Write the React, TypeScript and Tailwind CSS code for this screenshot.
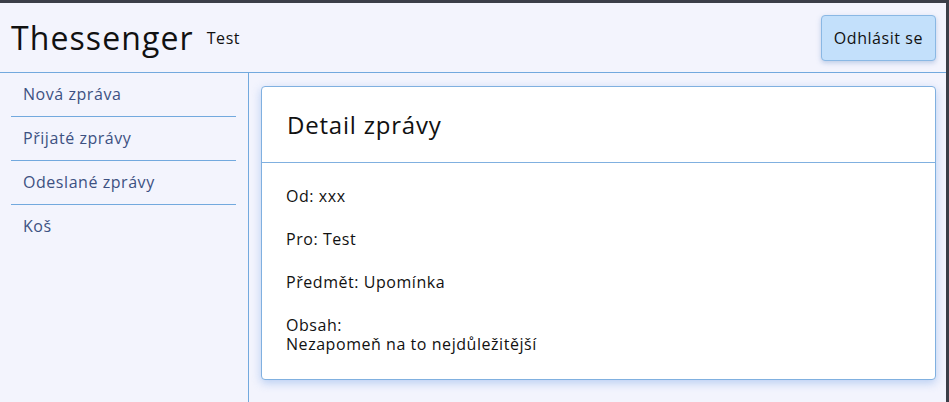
import React from "react";

const font = { fontFamily: '"Open Sans", "DejaVu Sans", sans-serif' };

export default function App() {
  const nav = ["Nová zpráva", "Přijaté zprávy", "Odeslané zprávy", "Koš"];
  return (
    <div
      className="w-[949px] h-[402px] flex flex-col bg-[#f3f4fd] border-t-[3px] border-r-[3px] border-[#3b3e48] text-[#111] overflow-hidden tracking-[0.55px]"
      style={font}
    >
      <header className="h-[70px] shrink-0 flex items-center justify-between border-b border-[#72a9de] pl-[11px] pr-[10px]">
        <div className="flex items-center gap-[13px]">
          <span className="text-[32px] leading-none tracking-[1.1px]">Thessenger</span>
          <span className="text-[16px] leading-none">Test</span>
        </div>
        <button className="h-[46px] px-[12px] rounded-[4px] bg-[#c3e0fb] border border-[#8ab8e4] text-[16px] shadow-[0_2px_5px_rgba(90,130,190,0.35)]">
          Odhlásit se
        </button>
      </header>
      <div className="flex flex-1 min-h-0">
        <aside className="w-[249px] shrink-0 border-r border-[#72a9de]">
          <ul className="pl-[11px] pr-[12px]">
            {nav.map((n, i) => (
              <li
                key={n}
                className={
                  "h-[44px] flex items-center pl-[12px] pb-[2px] text-[16px] text-[#3d5182] " +
                  (i < nav.length - 1 ? "border-b border-[#72a9de]" : "")
                }
              >
                {n}
              </li>
            ))}
          </ul>
        </aside>
        <main className="flex-1 pl-[12px] pr-[10px] pt-[13px]">
          <div className="bg-white border border-[#80b0e0] rounded-[4px] shadow-[0_3px_10px_rgba(110,160,230,0.45)]">
            <div className="px-[25px] py-[23px] border-b border-[#80b0e0]">
              <h1 className="text-[24px] leading-[29px] tracking-[0.8px]">Detail zprávy</h1>
            </div>
            <div className="px-[24px] pt-[24px] pb-[25px] text-[16px] leading-[19px]">
              <p className="mb-[24px]">Od: xxx</p>
              <p className="mb-[24px]">Pro: Test</p>
              <p className="mb-[24px]">Předmět: Upomínka</p>
              <p>Obsah:</p>
              <p>Nezapomeň na to nejdůležitější</p>
            </div>
          </div>
        </main>
      </div>
    </div>
  );
}
